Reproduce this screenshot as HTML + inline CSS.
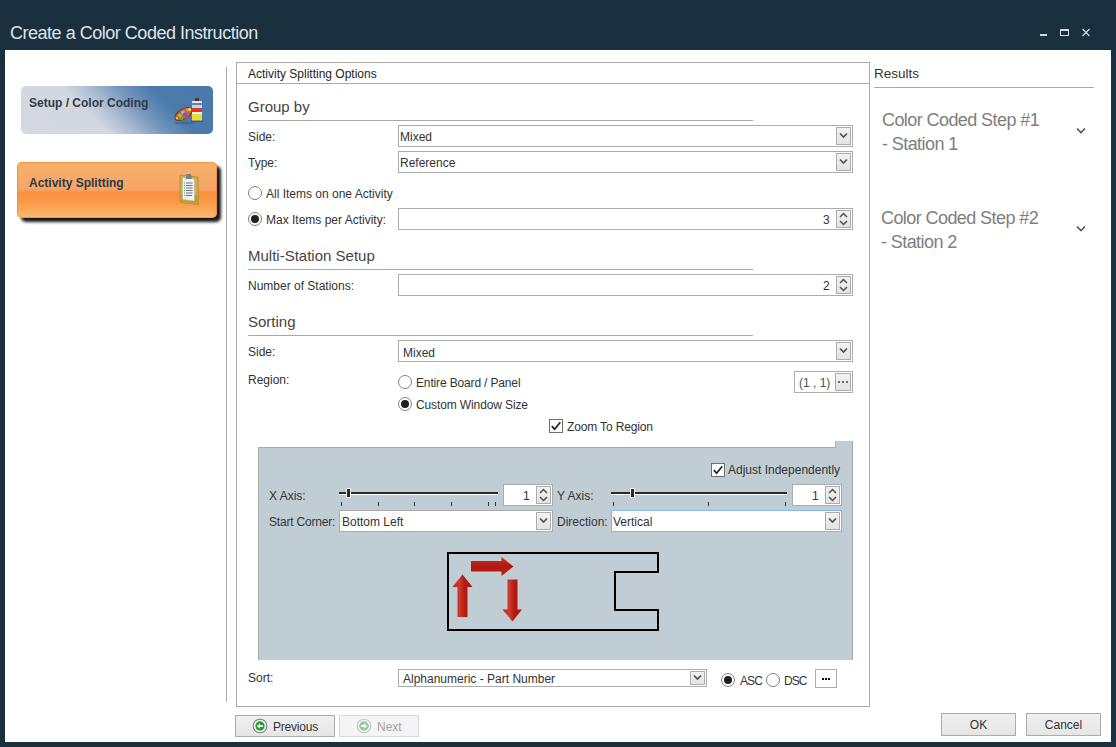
<!DOCTYPE html><html><head><meta charset="utf-8"><style>
html,body{margin:0;padding:0;}
body{width:1116px;height:747px;overflow:hidden;position:relative;background:#1a303e;font-family:'Liberation Sans', sans-serif;}
.a{position:absolute;}
.t{position:absolute;white-space:pre;font-family:'Liberation Sans', sans-serif;}
.btn{border:1px solid #acacac;background:linear-gradient(#f2f2f2,#e3e3e3);}
</style></head><body>
<div class="t" style="left:10px;top:23px;font-size:18px;line-height:20px;color:#dfe3e7;font-weight:400;letter-spacing:-0.48px">Create a Color Coded Instruction</div>
<div class="a" style="left:1040px;top:34px;width:7px;height:2px;background:#d9d9d9"></div>
<div class="a" style="left:1060px;top:29px;width:7px;height:4px;border:1px solid #d9d9d9;border-top-width:2px"></div>
<svg class="a" style="left:1081px;top:28px" width="10" height="10" viewBox="0 0 10 10"><path d="M1.5 1 L8.5 8 M8.5 1 L1.5 8" stroke="#d9d9d9" stroke-width="1.2"/></svg>
<div class="a" style="left:5px;top:50px;width:1106px;height:692px;background:#fff"></div>
<div class="a" style="left:21px;top:86px;width:192px;height:48px;border-radius:5px;background:linear-gradient(45deg,#d3d8e1 0%,#d2d7e0 37%,#a9bcd3 48%,#7696bd 60%,#4b7bad 73%,#4a79aa 100%)"></div>
<div class="t" style="left:29px;top:96px;font-size:12px;line-height:14px;color:#333a48;font-weight:700;">Setup / Color Coding</div>
<svg class="a" style="left:170px;top:94px" width="38" height="32" viewBox="0 0 38 32">
<ellipse cx="14" cy="29" rx="10" ry="1.5" fill="#2a4a70" opacity="0.35"/>
<ellipse cx="13.5" cy="20" rx="9.8" ry="5" transform="rotate(-32 13.5 20)" fill="#b5702a" stroke="#6e3c12" stroke-width="0.9"/>
<ellipse cx="7" cy="24" rx="1.2" ry="0.8" fill="#f4e8d0"/>
<circle cx="10" cy="21.5" r="1.8" fill="#f0a040"/><circle cx="11.5" cy="24.2" r="1.8" fill="#20c840"/><circle cx="13" cy="18.5" r="1.8" fill="#40e0f0"/><circle cx="15" cy="20.5" r="1.9" fill="#a040d0"/><circle cx="16.5" cy="23" r="1.8" fill="#f03070"/><circle cx="17" cy="16" r="1.7" fill="#f060c0"/><circle cx="19.5" cy="15.5" r="1.7" fill="#f0d040"/>
<rect x="25" y="4" width="4" height="3" fill="#5a3020"/>
<rect x="22" y="7" width="10" height="20" fill="#e8e8e0"/>
<rect x="22" y="9" width="10" height="2" fill="#3a8ee0"/>
<rect x="22" y="11" width="10" height="3" fill="#d4d4cc"/>
<rect x="22" y="14" width="10" height="4" fill="#e83028"/>
<rect x="22" y="18" width="10" height="2" fill="#f2f2ea"/>
<rect x="22" y="20" width="10" height="6.5" fill="#e6de30"/>
<rect x="21" y="26.5" width="12" height="1.6" fill="#555"/>
</svg>
<div class="a" style="left:21px;top:166px;width:200px;height:56px;border-radius:5px;background:#000;filter:blur(1.5px);opacity:0.9"></div>
<div class="a" style="left:17px;top:162px;width:200px;height:56px;border-radius:5px;background:linear-gradient(#f8b26c 0%,#f6a466 50%,#f99040 54%,#fa9c4c 75%,#fdbd6c 100%);box-shadow:inset 0 0 0 1px rgba(240,130,40,0.6)"></div>
<div class="t" style="left:29px;top:176px;font-size:12px;line-height:14px;color:#2e3a48;font-weight:700;">Activity Splitting</div>
<svg class="a" style="left:174px;top:170px" width="32" height="40" viewBox="0 0 32 40">
<path d="M6 5 L24 7 L24.5 34.5 L6 32.5 Z" fill="#d9ae3c" stroke="#b08a28" stroke-width="0.8"/>
<path d="M6 24 L24 25 L24.5 34.5 L6 32.5 Z" fill="#c89a30"/>
<path d="M8.5 7.5 L20.5 9 L20.5 31 L8.5 29.5 Z" fill="#eef2f6" stroke="#a8b0b8" stroke-width="0.5"/>
<path d="M12.5 4 h4.5 l0.8 5 h-6 z" fill="#7a8088"/>
<path d="M12 13h6.5M12 15.5h6.5M12 18h6.5M12 20.5h6.5M12 23h6.5M12 25.5h6" stroke="#505050" stroke-width="0.8"/>
<path d="M10 13h1M10 15.5h1M10 18h1M10 20.5h1M10 23h1M10 25.5h1" stroke="#30c040" stroke-width="1"/>
</svg>
<div class="a" style="left:226px;top:67px;width:1px;height:635px;background:#a9a9a9"></div>
<div class="a" style="left:236px;top:62px;width:632px;height:643px;border:1px solid #a9a9a9"></div>
<div class="a" style="left:237px;top:83px;width:632px;height:1px;background:#a9a9a9"></div>
<div class="t" style="left:248px;top:67px;font-size:12px;line-height:14px;color:#1e1e1e;font-weight:400;">Activity Splitting Options</div>
<div class="t" style="left:248px;top:98px;font-size:15px;line-height:17px;color:#454545;font-weight:400;">Group by</div>
<div class="a" style="left:248px;top:120px;width:505px;height:1px;background:#a9a9a9"></div>
<div class="t" style="left:248px;top:130px;font-size:12px;line-height:14px;color:#333;font-weight:400;">Side:</div>
<div class="a" style="left:398px;top:125px;width:453px;height:20px;border:1px solid #acacac;background:#fff"></div>
<div class="t" style="left:400px;top:130px;font-size:12px;line-height:14px;color:#333;font-weight:400;">Mixed</div>
<div class="a btn" style="left:836px;top:127px;width:13px;height:16px;"><svg class="a" style="left:0;top:0" width="13" height="16" viewBox="0 0 13 16"><path d="M3 5.5 L6.5 9.0 L10 5.5" fill="none" stroke="#505050" stroke-width="1.7"/></svg></div>
<div class="t" style="left:248px;top:156px;font-size:12px;line-height:14px;color:#333;font-weight:400;">Type:</div>
<div class="a" style="left:398px;top:151px;width:453px;height:20px;border:1px solid #acacac;background:#fff"></div>
<div class="t" style="left:400px;top:156px;font-size:12px;line-height:14px;color:#333;font-weight:400;">Reference</div>
<div class="a btn" style="left:836px;top:153px;width:13px;height:16px;"><svg class="a" style="left:0;top:0" width="13" height="16" viewBox="0 0 13 16"><path d="M3 5.5 L6.5 9.0 L10 5.5" fill="none" stroke="#505050" stroke-width="1.7"/></svg></div>
<svg class="a" style="left:247px;top:185px" width="16" height="16" viewBox="0 0 16 16"><circle cx="8" cy="8" r="6.5" fill="#fff" stroke="#808080" stroke-width="1"/></svg>
<div class="t" style="left:266px;top:187px;font-size:12px;line-height:14px;color:#333;font-weight:400;">All Items on one Activity</div>
<svg class="a" style="left:247px;top:211px" width="16" height="16" viewBox="0 0 16 16"><circle cx="8" cy="8" r="6.5" fill="#fff" stroke="#808080" stroke-width="1"/><circle cx="8" cy="8" r="4" fill="#202020"/></svg>
<div class="t" style="left:266px;top:213px;font-size:12px;line-height:14px;color:#333;font-weight:400;">Max Items per Activity:</div>
<div class="a" style="left:398px;top:208px;width:453px;height:20px;border:1px solid #acacac;background:#fff"></div>
<div class="t" style="left:823px;top:213px;font-size:12px;line-height:14px;color:#333;font-weight:400;">3</div>
<div class="a btn" style="left:836px;top:210px;width:13px;height:16px;"><svg class="a" style="left:0;top:0" width="13" height="16" viewBox="0 0 13 16"><path d="M3 6 L6.5 2.5 L10 6 M3 10 L6.5 13.5 L10 10" fill="none" stroke="#505050" stroke-width="1.5"/></svg></div>
<div class="t" style="left:248px;top:247px;font-size:15px;line-height:17px;color:#454545;font-weight:400;">Multi-Station Setup</div>
<div class="a" style="left:248px;top:269px;width:505px;height:1px;background:#a9a9a9"></div>
<div class="t" style="left:248px;top:279px;font-size:12px;line-height:14px;color:#333;font-weight:400;">Number of Stations:</div>
<div class="a" style="left:398px;top:274px;width:453px;height:20px;border:1px solid #acacac;background:#fff"></div>
<div class="t" style="left:823px;top:279px;font-size:12px;line-height:14px;color:#333;font-weight:400;">2</div>
<div class="a btn" style="left:836px;top:276px;width:13px;height:16px;"><svg class="a" style="left:0;top:0" width="13" height="16" viewBox="0 0 13 16"><path d="M3 6 L6.5 2.5 L10 6 M3 10 L6.5 13.5 L10 10" fill="none" stroke="#505050" stroke-width="1.5"/></svg></div>
<div class="t" style="left:248px;top:313px;font-size:15px;line-height:17px;color:#454545;font-weight:400;">Sorting</div>
<div class="a" style="left:248px;top:335px;width:505px;height:1px;background:#a9a9a9"></div>
<div class="t" style="left:248px;top:345px;font-size:12px;line-height:14px;color:#333;font-weight:400;">Side:</div>
<div class="a" style="left:398px;top:340px;width:453px;height:20px;border:1px solid #acacac;background:#fff"></div>
<div class="t" style="left:403px;top:346px;font-size:12px;line-height:14px;color:#333;font-weight:400;">Mixed</div>
<div class="a btn" style="left:836px;top:342px;width:13px;height:16px;"><svg class="a" style="left:0;top:0" width="13" height="16" viewBox="0 0 13 16"><path d="M3 5.5 L6.5 9.0 L10 5.5" fill="none" stroke="#505050" stroke-width="1.7"/></svg></div>
<div class="t" style="left:248px;top:373px;font-size:12px;line-height:14px;color:#333;font-weight:400;">Region:</div>
<svg class="a" style="left:397px;top:374px" width="16" height="16" viewBox="0 0 16 16"><circle cx="8" cy="8" r="6.5" fill="#fff" stroke="#808080" stroke-width="1"/></svg>
<div class="t" style="left:416px;top:376px;font-size:12px;line-height:14px;color:#333;font-weight:400;letter-spacing:-0.15px">Entire Board / Panel</div>
<svg class="a" style="left:397px;top:396px" width="16" height="16" viewBox="0 0 16 16"><circle cx="8" cy="8" r="6.5" fill="#fff" stroke="#808080" stroke-width="1"/><circle cx="8" cy="8" r="4" fill="#202020"/></svg>
<div class="t" style="left:416px;top:398px;font-size:12px;line-height:14px;color:#333;font-weight:400;letter-spacing:-0.12px">Custom Window Size</div>
<div class="a" style="left:794px;top:371px;width:57px;height:20px;border:1px solid #acacac;background:#fff"></div>
<div class="t" style="left:799px;top:376px;font-size:12px;line-height:14px;color:#505050;font-weight:400;">(1 , 1)</div>
<div class="a btn" style="left:835px;top:373px;width:14px;height:16px;"></div>
<svg class="a" style="left:835px;top:373px" width="16" height="18"><rect x="3" y="8" width="2" height="2" fill="#6a6a6a"/><rect x="7" y="8" width="2" height="2" fill="#6a6a6a"/><rect x="11" y="8" width="2" height="2" fill="#6a6a6a"/></svg>
<svg class="a" style="left:549px;top:419px" width="14" height="14" viewBox="0 0 14 14"><rect x="0.5" y="0.5" width="13" height="13" fill="#fff" stroke="#6e6e6e" stroke-width="1"/><path d="M2.8 7.2 L5.6 10.2 L11.3 3.2" fill="none" stroke="#222" stroke-width="1.7"/></svg>
<div class="t" style="left:567px;top:420px;font-size:12px;line-height:14px;color:#333;font-weight:400;letter-spacing:-0.14px">Zoom To Region</div>
<div class="a" style="left:258px;top:447px;width:593px;height:212px;background:#c1cdd5;border:1px solid #a3a9ae;border-bottom:none"></div>
<div class="a" style="left:835px;top:441px;width:16px;height:7px;background:#c1cdd5;border-left:1px solid #a9b3ba;border-right:1px solid #a3a9ae"></div>
<svg class="a" style="left:711px;top:463px" width="14" height="14" viewBox="0 0 14 14"><rect x="0.5" y="0.5" width="13" height="13" fill="#fff" stroke="#6e6e6e" stroke-width="1"/><path d="M2.8 7.2 L5.6 10.2 L11.3 3.2" fill="none" stroke="#222" stroke-width="1.7"/></svg>
<div class="t" style="left:728px;top:463px;font-size:12px;line-height:14px;color:#333;font-weight:400;">Adjust Independently</div>
<div class="t" style="left:269px;top:489px;font-size:12px;line-height:14px;color:#333;font-weight:400;">X Axis:</div>
<div class="a" style="left:339px;top:492px;width:159px;height:2px;background:#2a2a2a;box-shadow:0 1px 0 #fff"></div>
<div class="a" style="left:346px;top:488px;width:3px;height:8px;background:#2a2a2a;border:1px solid #eef0f2"></div>
<div class="a" style="left:341px;top:502px;width:1px;height:4px;background:#333"></div>
<div class="a" style="left:378px;top:502px;width:1px;height:4px;background:#333"></div>
<div class="a" style="left:414px;top:502px;width:1px;height:4px;background:#333"></div>
<div class="a" style="left:451px;top:502px;width:1px;height:4px;background:#333"></div>
<div class="a" style="left:488px;top:502px;width:1px;height:4px;background:#333"></div>
<div class="a" style="left:495px;top:502px;width:1px;height:4px;background:#333"></div>
<div class="a" style="left:503px;top:484px;width:48px;height:20px;border:1px solid #acacac;background:#fff"></div>
<div class="t" style="left:523px;top:489px;font-size:12px;line-height:14px;color:#333;font-weight:400;">1</div>
<div class="a btn" style="left:536px;top:486px;width:13px;height:16px;"><svg class="a" style="left:0;top:0" width="13" height="16" viewBox="0 0 13 16"><path d="M3 6 L6.5 2.5 L10 6 M3 10 L6.5 13.5 L10 10" fill="none" stroke="#505050" stroke-width="1.5"/></svg></div>
<div class="t" style="left:557px;top:489px;font-size:12px;line-height:14px;color:#333;font-weight:400;">Y Axis:</div>
<div class="a" style="left:611px;top:492px;width:176px;height:2px;background:#2a2a2a;box-shadow:0 1px 0 #fff"></div>
<div class="a" style="left:630px;top:488px;width:3px;height:8px;background:#2a2a2a;border:1px solid #eef0f2"></div>
<div class="a" style="left:613px;top:502px;width:1px;height:4px;background:#333"></div>
<div class="a" style="left:708px;top:502px;width:1px;height:4px;background:#333"></div>
<div class="a" style="left:785px;top:502px;width:1px;height:4px;background:#333"></div>
<div class="a" style="left:792px;top:484px;width:48px;height:20px;border:1px solid #acacac;background:#fff"></div>
<div class="t" style="left:812px;top:489px;font-size:12px;line-height:14px;color:#333;font-weight:400;">1</div>
<div class="a btn" style="left:825px;top:486px;width:13px;height:16px;"><svg class="a" style="left:0;top:0" width="13" height="16" viewBox="0 0 13 16"><path d="M3 6 L6.5 2.5 L10 6 M3 10 L6.5 13.5 L10 10" fill="none" stroke="#505050" stroke-width="1.5"/></svg></div>
<div class="t" style="left:269px;top:515px;font-size:12px;line-height:14px;color:#333;font-weight:400;letter-spacing:-0.2px">Start Corner:</div>
<div class="a" style="left:339px;top:510px;width:212px;height:20px;border:1px solid #acacac;background:#fff"></div>
<div class="t" style="left:342px;top:515px;font-size:12px;line-height:14px;color:#333;font-weight:400;">Bottom Left</div>
<div class="a btn" style="left:536px;top:512px;width:13px;height:16px;"><svg class="a" style="left:0;top:0" width="13" height="16" viewBox="0 0 13 16"><path d="M3 5.5 L6.5 9.0 L10 5.5" fill="none" stroke="#505050" stroke-width="1.7"/></svg></div>
<div class="t" style="left:557px;top:515px;font-size:12px;line-height:14px;color:#333;font-weight:400;">Direction:</div>
<div class="a" style="left:611px;top:510px;width:229px;height:20px;border:1px solid #86b6e2;background:#fff"></div>
<div class="t" style="left:613px;top:515px;font-size:12px;line-height:14px;color:#333;font-weight:400;">Vertical</div>
<div class="a btn" style="left:825px;top:512px;width:13px;height:16px;"><svg class="a" style="left:0;top:0" width="13" height="16" viewBox="0 0 13 16"><path d="M3 5.5 L6.5 9.0 L10 5.5" fill="none" stroke="#505050" stroke-width="1.7"/></svg></div>
<svg class="a" style="left:440px;top:545px" width="230" height="95" viewBox="440 545 230 95">
<path d="M448 553 H658 V572 H615 V610 H658 V630 H448 Z" fill="none" stroke="#000" stroke-width="2"/>
<defs><linearGradient id="gh" x1="0" y1="0" x2="0" y2="1"><stop offset="0" stop-color="#c83028"/><stop offset="0.5" stop-color="#b01810"/><stop offset="1" stop-color="#bc2016"/></linearGradient>
<linearGradient id="gv" x1="0" y1="0" x2="1" y2="0"><stop offset="0" stop-color="#c02018"/><stop offset="0.35" stop-color="#cc3a30"/><stop offset="0.6" stop-color="#b81810"/><stop offset="1" stop-color="#b01610"/></linearGradient></defs>
<path d="M457.5 617 V587 H452.5 L462.5 574.5 L472.5 587 H467.5 V617 Z" fill="url(#gv)"/>
<path d="M471 561 H501.5 V557 L513.5 566.5 L501.5 576 V571.5 H471 Z" fill="url(#gh)"/>
<path d="M507.5 579.5 H517.5 V609.5 H522 L512.5 621.5 L502.5 609.5 H507.5 Z" fill="url(#gv)"/>
</svg>
<div class="t" style="left:248px;top:671px;font-size:12px;line-height:14px;color:#333;font-weight:400;">Sort:</div>
<div class="a" style="left:398px;top:669px;width:307px;height:16px;border:1px solid #acacac;background:#fff"></div>
<div class="t" style="left:403px;top:672px;font-size:12px;line-height:14px;color:#333;font-weight:400;">Alphanumeric - Part Number</div>
<div class="a btn" style="left:690px;top:671px;width:13px;height:12px;"><svg class="a" style="left:0;top:0" width="13" height="12" viewBox="0 0 13 12"><path d="M3 3.5 L6.5 7.0 L10 3.5" fill="none" stroke="#505050" stroke-width="1.7"/></svg></div>
<svg class="a" style="left:720px;top:672px" width="16" height="16" viewBox="0 0 16 16"><circle cx="8" cy="8" r="6.5" fill="#fff" stroke="#808080" stroke-width="1"/><circle cx="8" cy="8" r="4" fill="#202020"/></svg>
<div class="t" style="left:740px;top:674px;font-size:12px;line-height:14px;color:#333;font-weight:400;letter-spacing:-0.9px">ASC</div>
<svg class="a" style="left:765px;top:672px" width="16" height="16" viewBox="0 0 16 16"><circle cx="8" cy="8" r="6.5" fill="#fff" stroke="#808080" stroke-width="1"/></svg>
<div class="t" style="left:784px;top:674px;font-size:12px;line-height:14px;color:#333;font-weight:400;letter-spacing:-0.9px">DSC</div>
<div class="a" style="left:815px;top:669px;width:20px;height:17px;border:1px solid #acacac;background:#fff"></div>
<svg class="a" style="left:815px;top:669px" width="22" height="19"><rect x="7" y="9" width="2" height="2" fill="#111"/><rect x="10" y="9" width="2" height="2" fill="#111"/><rect x="13" y="9" width="2" height="2" fill="#111"/></svg>
<div class="a" style="left:235px;top:715px;width:98px;height:20px;border:1px solid #acacac;background:linear-gradient(#f0f0f0,#e5e5e5)"></div>
<svg class="a" style="left:252px;top:718px" width="16" height="16" viewBox="0 0 16 16">
<circle cx="8" cy="8" r="6.8" fill="#fff" stroke="#7a7a7a" stroke-width="1.1"/>
<circle cx="8" cy="8" r="4.7" fill="#22a02a"/>
<path d="M4.8 8 L8 5.2 V7 H11 V9 H8 V10.8 Z" fill="#fff"/></svg>
<div class="t" style="left:273px;top:720px;font-size:12px;line-height:14px;color:#333;font-weight:400;letter-spacing:-0.2px">Previous</div>
<div class="a" style="left:339px;top:715px;width:78px;height:20px;border:1px solid #d9d9d9;background:#f4f4f4"></div>
<svg class="a" style="left:356px;top:718px" width="16" height="16" viewBox="0 0 16 16">
<circle cx="8" cy="8" r="6.8" fill="#f4f4f4" stroke="#c4c4c4" stroke-width="1.1"/>
<circle cx="8" cy="8" r="4.7" fill="#8fd090"/>
<path d="M11.2 8 L8 5.2 V7 H5 V9 H8 V10.8 Z" fill="#fff"/></svg>
<div class="t" style="left:377px;top:720px;font-size:12px;line-height:14px;color:#a2a2a2;font-weight:400;">Next</div>
<div class="a" style="left:941px;top:713px;width:73px;height:21px;border:1px solid #acacac;background:linear-gradient(#f0f0f0,#e5e5e5)"></div>
<div class="t" style="left:941px;top:718px;width:75px;text-align:center;font-size:12px;line-height:14px;color:#333">OK</div>
<div class="a" style="left:1026px;top:713px;width:73px;height:21px;border:1px solid #acacac;background:linear-gradient(#f0f0f0,#e5e5e5)"></div>
<div class="t" style="left:1026px;top:718px;width:75px;text-align:center;font-size:12px;line-height:14px;color:#333">Cancel</div>
<div class="t" style="left:874px;top:66px;font-size:13.5px;line-height:15px;color:#333;font-weight:400;">Results</div>
<div class="a" style="left:874px;top:87px;width:220px;height:1px;background:#a9a9a9"></div>
<div class="t" style="left:882px;top:110px;font-size:18px;line-height:20px;color:#7e7e7e;font-weight:400;letter-spacing:-0.58px">Color Coded Step #1</div>
<div class="t" style="left:882px;top:134px;font-size:18px;line-height:20px;color:#7e7e7e;font-weight:400;letter-spacing:-0.58px">- Station 1</div>
<svg class="a" style="left:1075px;top:126px" width="12" height="10"><path d="M2 2.5 L6 6.5 L10 2.5" fill="none" stroke="#555" stroke-width="1.6"/></svg>
<div class="t" style="left:881px;top:208px;font-size:18px;line-height:20px;color:#7e7e7e;font-weight:400;letter-spacing:-0.58px">Color Coded Step #2</div>
<div class="t" style="left:881px;top:232px;font-size:18px;line-height:20px;color:#7e7e7e;font-weight:400;letter-spacing:-0.58px">- Station 2</div>
<svg class="a" style="left:1075px;top:224px" width="12" height="10"><path d="M2 2.5 L6 6.5 L10 2.5" fill="none" stroke="#555" stroke-width="1.6"/></svg>
</body></html>
